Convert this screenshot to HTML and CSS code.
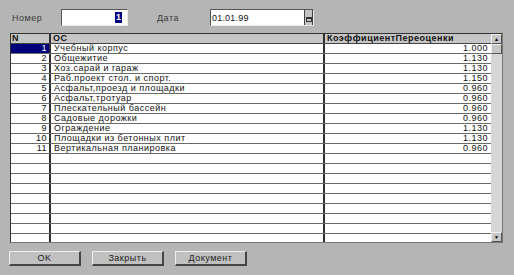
FILE: index.html
```html
<!doctype html>
<html>
<head>
<meta charset="utf-8">
<title>Переоценка ОС</title>
<link rel="stylesheet" href="styles.css">
</head>
<body>
<div class="top">
	<span class="lbl lbl_num">Номер</span>
	<div class="edit num_box"><span class="sel">1</span></div>
	<span class="lbl lbl_date">Дата</span>
	<div class="edit date_box">
		<span class="date_txt">01.01.99</span>
		<span class="date_btn"><i></i></span>
	</div>
</div>
<div class="grid">
	<div class="grid_body">
		<div class="row head">
			<div class="c_n">N</div>
			<div class="c_name">ОС</div>
			<div class="c_k">КоэффициентПереоценки</div>
		</div>
		<div class="row"><div class="c_n cur">1</div><div class="c_name">Учебный корпус</div><div class="c_k">1.000</div></div>
		<div class="row"><div class="c_n">2</div><div class="c_name">Общежитие</div><div class="c_k">1.130</div></div>
		<div class="row"><div class="c_n">3</div><div class="c_name">Хоз.сарай и гараж</div><div class="c_k">1.130</div></div>
		<div class="row"><div class="c_n">4</div><div class="c_name">Раб.проект стол. и спорт.</div><div class="c_k">1.150</div></div>
		<div class="row"><div class="c_n">5</div><div class="c_name">Асфальт,проезд и площадки</div><div class="c_k">0.960</div></div>
		<div class="row"><div class="c_n">6</div><div class="c_name">Асфальт,тротуар</div><div class="c_k">0.960</div></div>
		<div class="row"><div class="c_n">7</div><div class="c_name">Плескательный бассейн</div><div class="c_k">0.960</div></div>
		<div class="row"><div class="c_n">8</div><div class="c_name">Садовые дорожки</div><div class="c_k">0.960</div></div>
		<div class="row"><div class="c_n">9</div><div class="c_name">Ограждение</div><div class="c_k">1.130</div></div>
		<div class="row"><div class="c_n">10</div><div class="c_name">Площадки из бетонных плит</div><div class="c_k">1.130</div></div>
		<div class="row"><div class="c_n">11</div><div class="c_name">Вертикальная планировка</div><div class="c_k">0.960</div></div>
		<div class="row"><div class="c_n"></div><div class="c_name"></div><div class="c_k"></div></div>
		<div class="row"><div class="c_n"></div><div class="c_name"></div><div class="c_k"></div></div>
		<div class="row"><div class="c_n"></div><div class="c_name"></div><div class="c_k"></div></div>
		<div class="row"><div class="c_n"></div><div class="c_name"></div><div class="c_k"></div></div>
		<div class="row"><div class="c_n"></div><div class="c_name"></div><div class="c_k"></div></div>
		<div class="row"><div class="c_n"></div><div class="c_name"></div><div class="c_k"></div></div>
		<div class="row"><div class="c_n"></div><div class="c_name"></div><div class="c_k"></div></div>
		<div class="row"><div class="c_n"></div><div class="c_name"></div><div class="c_k"></div></div>
		<div class="row"><div class="c_n"></div><div class="c_name"></div><div class="c_k"></div></div>
		<div class="row"><div class="c_n"></div><div class="c_name"></div><div class="c_k"></div></div>
	</div>
	<div class="vscroll">
		<div class="sb_btn">&#9650;</div>
		<div class="sb_thumb"></div>
		<div class="sb_track"></div>
		<div class="sb_btn">&#9660;</div>
	</div>
</div>
<div class="btns">
	<div class="btn">OK</div>
	<div class="btn">Закрыть</div>
	<div class="btn">Документ</div>
</div>
</body>
</html>
```
FILE: styles.css
```css
*{margin:0; padding:0; box-sizing:border-box;}
body{background:#b5b5b5; font-family:"Liberation Sans", Arial, sans-serif; font-size:9px; letter-spacing:0.5px; color:#111; width:514px; height:275px; overflow:hidden;}

.top{display:flex; align-items:center; height:33px; padding-top:2px;}
.lbl{color:#3a3a3a; font-size:9px;}
.lbl_num{margin-left:12px; width:49px;}
.lbl_date{margin-left:29px; width:53px;}
.edit{height:17px; background:#fff; border-top:1px solid #555; border-left:1px solid #555; border-right:1px solid #e8e8e8; border-bottom:1px solid #e8e8e8; display:flex; align-items:center;}
.num_box{width:67px; justify-content:flex-end; padding-right:5px;}
.sel{background:#000080; color:#fff; font-weight:bold; padding:0 1px; line-height:11px; letter-spacing:0;}
.date_box{width:104px; padding-left:1px;}
.date_txt{flex:1; color:#111; letter-spacing:0.2px;}
.date_btn{width:9px; height:15px; background:#c4c4c4; border-left:1px solid #444; border-right:1px solid #444; display:flex; align-items:flex-end; justify-content:center; padding-bottom:3px;}
.date_btn i{display:block; width:6px; height:5px; border:1px solid #333; border-top-width:2px;}

.grid{margin-left:10px; width:493px; height:210px; display:flex; border:1px solid #333; border-right-color:#777; border-bottom-color:#777; background:#fff;}
.grid_body{flex:1; overflow:hidden;}
.row{display:flex; height:10px; border-bottom:1px solid #6a6a6a; line-height:9px;}
.row div{overflow:hidden; white-space:nowrap;}
.c_n{width:40px; text-align:right; padding-right:2px; border-right:2px solid #303030;}
.c_name{width:274px; padding-left:3px; border-right:2px solid #303030;}
.c_k{flex:1; text-align:right; padding-right:3px;}
.cur{background:#00007b; color:#fff;}
.head{background:#c6c6c6; font-weight:bold; border-bottom:1px solid #444;}
.head .c_n{text-align:left; padding-left:1px;}
.head .c_name{padding-left:2px;}
.head .c_k{text-align:left; padding-left:2px;}

.vscroll{width:11px; display:flex; flex-direction:column; background:#d6d6d6;}
.sb_btn{height:10px; background:#c6c6c6; border-top:1px solid #f0f0f0; border-left:1px solid #f0f0f0; border-right:1px solid #555; border-bottom:1px solid #555; font-size:5px; line-height:8px; text-align:center; color:#000; letter-spacing:0;}
.sb_thumb{height:10px; background:#c6c6c6; border-top:1px solid #f0f0f0; border-left:1px solid #f0f0f0; border-right:1px solid #555; border-bottom:1px solid #555;}
.sb_track{flex:1;}

.btns{display:flex; gap:11px; margin:8px 0 0 9px;}
.btn{width:72px; height:15px; background:#c0c0c0; border-top:1px solid #eee; border-left:1px solid #eee; border-right:2px solid #444; border-bottom:2px solid #444; text-align:center; line-height:12px; color:#222;}
```
